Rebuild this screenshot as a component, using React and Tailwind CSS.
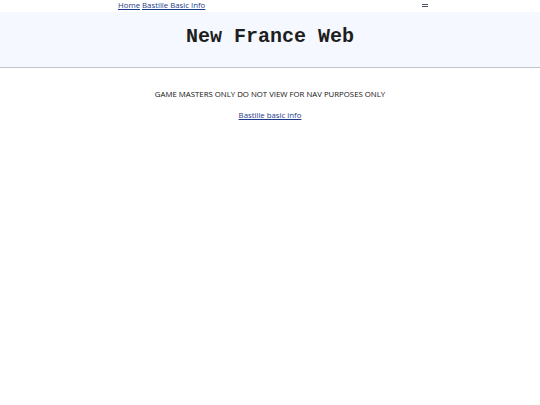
import React from 'react';

const sans = { fontFamily: '"Open Sans", "Noto Sans", sans-serif' };

function MenuIcon() {
  return (
    <svg width="6" height="5" viewBox="0 0 6 5" className="text-gray-600">
      <rect x="0" y="1" width="6" height="1" fill="currentColor" />
      <rect x="0" y="3" width="6" height="1" fill="currentColor" />
    </svg>
  );
}

export default function App() {
  return (
    <div className="min-h-[405px] bg-white text-black" style={sans}>
      {/* Top nav */}
      <nav className="h-3 flex items-center">
        <div className="mx-auto w-[316px] pl-[6px] flex items-center justify-between text-[7.8px] leading-none">
          <div className="flex gap-[2px]">
            <a href="#" className="underline text-[#1a3a8a]">Home</a>
            <a href="#" className="underline text-[#1a3a8a]">Bastille Basic Info</a>
          </div>
          <MenuIcon />
        </div>
      </nav>

      {/* Banner */}
      <header className="h-[56px] bg-[#f5f8ff] border-b border-[#c4c4cc] flex items-center justify-center pb-[6px]">
        <h1
          className="text-[20px] font-bold text-[#1e1e1e]"
          style={{ fontFamily: '"Liberation Mono", "Courier New", monospace' }}
        >
          New France Web
        </h1>
      </header>

      {/* Content */}
      <main className="flex flex-col items-center pt-[23px] text-[7.8px] leading-none">
        <p className="text-[#111]">GAME MASTERS ONLY DO NOT VIEW FOR NAV PURPOSES ONLY</p>
        <a href="#" className="mt-[13px] underline text-[#1a3a8a]">Bastille basic info</a>
      </main>
    </div>
  );
}
